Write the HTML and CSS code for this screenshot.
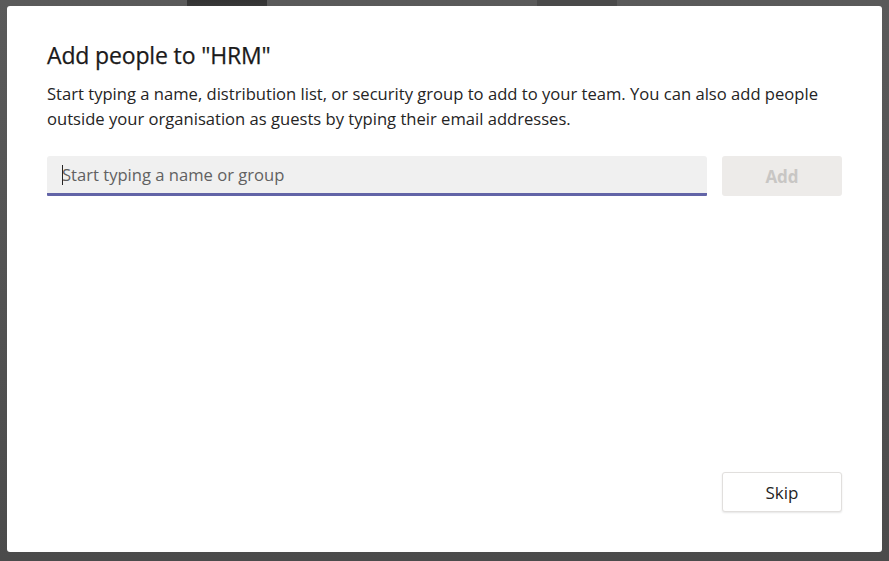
FILE: index.html
```html
<!DOCTYPE html>
<html lang="en">
<head>
    <meta charset="UTF-8">
    <meta name="viewport" content="width=device-width, initial-scale=1.0">
    <title>Add people to "HRM"</title>
    <link rel="stylesheet" href="styles.css">
</head>
<body>
    <!-- Add members dialog -->
    <div class="dialog">
        <h1 class="dialog-title">Add people to "HRM"</h1>
        <p class="dialog-text">Start typing a name, distribution list, or security group to add to your team. You can also add people outside your organisation as guests by typing their email addresses.</p>

        <div class="picker-row">
            <div class="picker">
                <span class="caret"></span>
                <input type="text" class="picker-input" placeholder="Start typing a name or group">
            </div>
            <button class="add-button" disabled>Add</button>
        </div>

        <div class="dialog-footer">
            <button class="skip-button">Skip</button>
        </div>
    </div>
</body>
</html>
```

FILE: styles.css
```css
html, body {
    height: 100%;
}
body {
    margin: 0;
    box-sizing: border-box;
    padding: 6px 7px 9px 7px;
    display: flex;
    font-family: "Open Sans", "Noto Sans", sans-serif;
    color: #252424;
    /* dimmed app behind the dialog */
    background:
        linear-gradient(#333333, #383838) 187px 0 / 80px 6px no-repeat,
        linear-gradient(#4a4a4a, #4a4a4a) 537px 0 / 80px 6px no-repeat,
        linear-gradient(#5a5a5a, #4b4b4b);
}
.dialog {
    flex: 1;
    background-color: #ffffff;
    border-radius: 3px;
    padding: 35px 40px 40px 40px;
    display: flex;
    flex-direction: column;
}
.dialog-title {
    margin: 0;
    font-size: 23px;
    line-height: 28px;
    font-weight: 400;
    letter-spacing: -0.15px;
    color: #1b1a1a;
    -webkit-text-stroke: 0.25px #1b1a1a;
}
.dialog-text {
    margin: 12px 0 0 0;
    font-size: 16.6px;
    line-height: 25px;
}
.picker-row {
    display: flex;
    gap: 15px;
    margin-top: 25px;
}
.picker {
    position: relative;
    width: 660px;
    height: 40px;
    box-sizing: border-box;
    background-color: #f0f0f0;
    border-bottom: 3px solid #6264a7;
    border-radius: 3px 3px 1px 1px;
}
.picker-input {
    width: 100%;
    height: 100%;
    box-sizing: border-box;
    border: none;
    outline: none;
    background: transparent;
    padding: 0 0 0 15px;
    font-family: inherit;
    font-size: 16.6px;
    color: #252424;
}
.picker-input::placeholder {
    color: #616161;
}
.caret {
    position: absolute;
    left: 15px;
    top: 9px;
    width: 1px;
    height: 20px;
    background-color: #252424;
}
.add-button {
    width: 120px;
    height: 40px;
    border: none;
    border-radius: 3px;
    background-color: #edebe9;
    color: #c8c6c4;
    font-family: inherit;
    font-size: 17px;
    font-weight: 700;
}
.dialog-footer {
    margin-top: auto;
    display: flex;
    justify-content: flex-end;
}
.skip-button {
    width: 120px;
    height: 40px;
    border: 1px solid #e1dfdd;
    border-radius: 3px;
    background-color: #ffffff;
    color: #252424;
    font-family: inherit;
    font-size: 17px;
    font-weight: 500;
    box-shadow: 0 1px 2px rgba(0, 0, 0, 0.1);
    cursor: pointer;
}
```
